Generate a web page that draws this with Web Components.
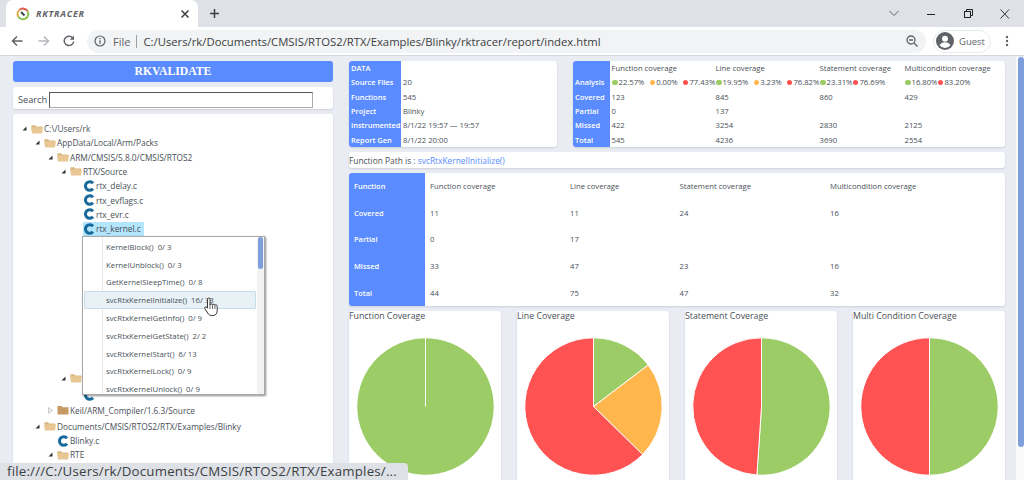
<!DOCTYPE html>
<html lang="en"><head><meta charset="utf-8"><title>RKTRACER</title>
<style>
html,body{margin:0;padding:0;height:100%;overflow:hidden}
body{font-family:"Open Sans","Liberation Sans",sans-serif;color:#495057;background:#e9edf3}
</style></head><body>
<rk-app></rk-app>
<script>
const el=(name,css,html)=>{customElements.define(name,class extends HTMLElement{
  constructor(){super();this.attachShadow({mode:'open'})}
  connectedCallback(){const h=typeof html==='function'?html(this):html;this.shadowRoot.innerHTML=`<style>${css}</style>${h}`;}
})};
const ui='"Open Sans","Noto Sans","Liberation Sans",sans-serif';

el('tab-strip',`:host{display:flex;height:27px;background:#dee1e6;align-items:flex-end;flex:none;position:relative}
.tab{width:192px;height:27px;margin-left:6px;background:#fff;border-radius:7px 7px 0 0;display:flex;align-items:center;box-sizing:border-box;padding:0 8px 0 10px}
.t{flex:1;margin-left:6px;font:italic 700 9px ${ui};letter-spacing:.75px;color:#5f6368}
.plus{margin-left:11px;align-self:center}
.ctl{margin-left:auto;display:flex;align-items:center;gap:21px;padding-right:11px;align-self:stretch}
svg{display:block}`,`<div class="tab">
<svg width="14" height="14" viewBox="0 0 14 14" fill="none"><path d="M2.3 9.7A5.3 5.3 0 0 1 4 2.5" stroke="#e4a23f" stroke-width="2"/><path d="M4 2.5A5.3 5.3 0 0 1 11.5 4" stroke="#df5a4a" stroke-width="2"/><path d="M11.5 4A5.3 5.3 0 1 1 2.3 9.7" stroke="#8cc152" stroke-width="2"/><path d="M5 5l3.5 3.5" stroke="#3a4650" stroke-width="2"/></svg>
<span class="t">RKTRACER</span>
<svg width="10" height="10" viewBox="0 0 10 10"><path d="M1.5 1.5l7 7M8.5 1.5l-7 7" stroke="#3c4043" stroke-width="1.5"/></svg></div>
<svg class="plus" width="11" height="11" viewBox="0 0 11 11"><path d="M5.5 1v9M1 5.5h9" stroke="#3c4043" stroke-width="1.5"/></svg>
<div class="ctl">
<svg width="16" height="10" viewBox="0 0 16 10"><path d="M3.5 2l4.5 4.5L12.5 2" fill="none" stroke="#5f6368"/></svg>
<svg width="16" height="10" viewBox="0 0 16 10"><path d="M4 5.5h8" stroke="#222"/></svg>
<svg width="16" height="10" viewBox="0 0 16 10" fill="none" stroke="#222"><rect x="4.5" y="2.5" width="6" height="6"/><path d="M6.5 2.5V.5h6v6h-2"/></svg>
<svg width="16" height="10" viewBox="0 0 16 10"><path d="M3.5.5l8.5 9M12 .5L3.5 9.5" stroke="#333"/></svg>
</div>`);

el('tool-bar',`:host{display:flex;align-items:center;height:28px;background:#fff;flex:none;border-bottom:1px solid #d5d8dd;position:relative;padding-left:11px}
svg{display:block;flex:none}
.om{margin-left:12px;width:839px;height:23px;border-radius:12px;background:#f1f3f4;display:flex;align-items:center;box-sizing:border-box;padding:0 8px 0 7px;font:11.3px ${ui};color:#3c4043}
.file{margin-left:7px;color:#5f6368;font-size:11px}
.sep{width:1px;height:13px;background:#9aa0a6;margin:0 6px 0 6px}
.url{flex:1;white-space:nowrap;overflow:hidden}
.pill{margin-left:7px;width:58px;height:23px;border:1px solid #e8eaed;box-sizing:border-box;border-radius:12px;display:flex;align-items:center;padding-left:2px;font:9.5px ${ui};color:#5f6368}
.pill span{margin-left:5px}
.keb{margin-left:14px}`,`
<svg width="12" height="12" viewBox="0 0 12 12" fill="none" stroke="#5f6368" stroke-width="1.5"><path d="M11.5 6H1.5M6 1.5L1.5 6 6 10.5"/></svg>
<svg style="margin-left:15px" width="12" height="12" viewBox="0 0 12 12" fill="none" stroke="#b6b9bd" stroke-width="1.5"><path d="M.5 6h10M6 1.5L10.5 6 6 10.5"/></svg>
<svg style="margin-left:13px" width="12" height="12" viewBox="0 0 12 12" fill="none"><path d="M10.6 6.5A4.7 4.7 0 1 1 9.3 2.6" stroke="#5f6368" stroke-width="1.5"/><path d="M11 .5v4.2H6.8z" fill="#5f6368"/></svg>
<div class="om">
<svg width="12" height="12" viewBox="0 0 12 12" fill="none"><circle cx="6" cy="6" r="5" stroke="#5f6368" stroke-width="1.2"/><path d="M6 5.3v3.5M6 3v1.3" stroke="#5f6368" stroke-width="1.3"/></svg>
<span class="file">File</span><span class="sep"></span>
<span class="url">C:/Users/rk/Documents/CMSIS/RTOS2/RTX/Examples/Blinky/rktracer/report/index.html</span>
<svg width="12" height="12" viewBox="0 0 12 12" fill="none" stroke="#5f6368" stroke-width="1.3"><circle cx="5" cy="5" r="4"/><path d="M3 5h4M8 8l3.5 3.5"/></svg>
</div>
<div class="pill"><svg width="18" height="18" viewBox="0 0 18 18"><circle cx="9" cy="9" r="9" fill="#5f6368"/><circle cx="9" cy="6.8" r="3" fill="#fff"/><path d="M3.5 13.2c1.5-2.4 3.5-3 5.5-3s4 .6 5.5 3A7 7 0 0 1 9 16a7 7 0 0 1-5.500-2.800z" fill="#fff"/></svg><span>Guest</span></div>
<svg class="keb" width="4" height="12" viewBox="0 0 4 12" fill="#5f6368"><circle cx="2" cy="2" r="1.2"/><circle cx="2" cy="6" r="1.2"/><circle cx="2" cy="10" r="1.2"/></svg>`);

el('rk-card',`:host{display:block;background:#fff;border-radius:3px;box-shadow:0 1px 2px rgba(0,0,0,.12);overflow:hidden;box-sizing:border-box}`,`<slot></slot>`);

el('tree-row',`:host{display:flex;align-items:center;height:14.3px;flex:none;font:8.3px ${ui};color:#495057;white-space:nowrap}
.tw{width:13px;flex:none;display:flex;justify-content:center}
.lab{display:flex;align-items:center;height:14.3px;padding-right:3px}
.lab.sel{background:#b3e5fc}
.lab span{margin-left:1px}
svg{display:block;flex:none}`,h=>{
 const lv=+h.getAttribute('level'),k=h.getAttribute('kind'),sel=h.hasAttribute('selected');
 const tw=k==='open'?`<svg width="5" height="5" viewBox="0 0 5 5"><path d="M4.5.5v4h-4z" fill="#333"/></svg>`
  :k==='closed'?`<svg width="5" height="7" viewBox="0 0 5 7"><path d="M.5.5L4.5 3.5.5 6.5z" fill="#eee" stroke="#bbb" stroke-width=".7"/></svg>`:'';
 const ic=k==='file'?`<svg width="12" height="12" viewBox="0 0 12 12"><path d="M10 3.2A4.3 4.3 0 1 0 10 8.8" fill="none" stroke="#176a9b" stroke-width="3"/></svg>`
  :k==='open'?`<svg width="12" height="10" viewBox="0 0 12 10"><path d="M.5 2.5V1.3h3.7l.8 1.2H11v1.5H.5z" fill="#d9b680"/><path d="M0 3.3h12l-1 6.2H1z" fill="#e8c795"/></svg>`
  :`<svg width="12" height="10" viewBox="0 0 12 10"><path d="M.5 9.5V1h4l1 1.2h6v7.3z" fill="#c49a62"/></svg>`;
 return `<div style="width:${lv*13}px;flex:none"></div><div class="tw">${tw}</div><div class="lab ${sel?'sel':''}">${ic}<span><slot></slot></span></div>`});

el('menu-item',`:host{display:flex;align-items:center;height:17.8px;padding-left:23px;font:7.8px ${ui};color:#495057;white-space:pre;box-sizing:border-box;position:relative;margin-right:8px}
:host([hover]){background:#e7f1f6;box-shadow:inset 0 0 0 1px #c6dde8;border-radius:2px;margin-left:1px;padding-left:22px}`,`<slot></slot>`);

el('func-menu',`:host{display:block;position:absolute;left:82px;top:236px;width:183px;height:159px;background:#fff;border:1px solid #a9a9a9;box-sizing:border-box;box-shadow:1px 1px 2px rgba(0,0,0,.45);overflow:hidden}
.line{position:absolute;left:19px;top:0;bottom:0;width:1px;background:#e6e6e6}
.track{position:absolute;right:0;top:0;bottom:0;width:7px;background:#f2f2f2}
.thumb{position:absolute;right:1px;top:0;width:5px;height:32px;background:#7f9fdc;border-radius:3px}
.items{position:relative;padding-top:1px}`,`<div class="line"></div><div class="track"></div><div class="thumb"></div><div class="items"><slot></slot></div>`);

el('rk-sidebar',`:host{display:flex;flex-direction:column;gap:5px;width:320px;flex:none}
.hd{height:21px;flex:none;background:#5b8cff;border-radius:3px;color:#fff;font:700 11.7px "Liberation Serif",serif;display:flex;align-items:center;justify-content:center}
.s{display:flex;align-items:center;height:25px;padding-left:5px;font:9.2px ${ui};color:#495057}
input{margin:0 0 0 2px;width:264px;height:16px;box-sizing:border-box;border:1px solid;border-color:#555 #aaa #aaa #555;padding:0;background:#fff}
.tr{display:flex;flex-direction:column;padding:7px 0 0 5px;height:400px}`,`<div class="hd">RKVALIDATE</div>
<rk-card><div class="s"><span>Search</span><input type="text" aria-label="Search"></div></rk-card>
<rk-card><div class="tr"><slot></slot></div></rk-card>`);

el('kv-table',`:host{display:block;height:100%;font:600 7.7px ${ui};color:#495057}
.g{display:grid;height:100%;grid-auto-rows:1fr}`,h=>`<div class="g" style="grid-template-columns:${h.getAttribute('cols')}"><slot></slot></div>`);

el('lab-cell',`:host{display:flex;align-items:center;background:#5b8cff;color:#fff;font:600 7.45px ${ui};white-space:nowrap;padding-left:2px}`,`<slot></slot>`);
el('val-cell',`:host{display:flex;align-items:center;font:7.7px ${ui};color:#495057;white-space:nowrap;padding-left:2px}`,`<slot></slot>`);
el('legend-cell',`:host{display:flex;align-items:center;padding-left:2px;font:7.7px ${ui};color:#495057;white-space:nowrap}`,`<slot></slot>`);
el('leg-item',`:host{display:inline-flex;align-items:center;white-space:nowrap}
i{width:5.5px;height:5.5px;border-radius:50%;margin:0 1px 0 .5px;flex:none}`,h=>`<i style="background:${{g:'#9ccc65',o:'#ffb74d',r:'#ff5252'}[h.getAttribute('c')]}"></i><slot></slot>`);

el('pie-chart',`:host{display:block;background:#fff;border-radius:3px;height:180px;box-shadow:0 1px 2px rgba(0,0,0,.12)}
.t{font:8.8px/11px ${ui};color:#495057;height:11px;white-space:nowrap}
svg{display:block;margin:14.5px auto 0 7px}`,h=>{
 const v=h.getAttribute('values').split(',').map(Number),cols=['#9ccc65','#ffb74d','#ff5252'],tot=v.reduce((a,b)=>a+b,0);
 let a=0,p='';const R=68.7,C=69.5;const pt=t=>[C+R*Math.sin(t),C-R*Math.cos(t)];
 v.forEach((x,i)=>{if(!x)return;const f=x/tot;if(f>=.9999){p+=`<circle cx="${C}" cy="${C}" r="${R}" fill="${cols[i]}" stroke="#fff" stroke-width="1"/><path d="M${C} ${C}V${C-R}" stroke="#fff" stroke-width="1"/>`;return}
  const s=pt(a),e=pt(a+=f*2*Math.PI);p+=`<path d="M${C} ${C}L${s[0].toFixed(2)} ${s[1].toFixed(2)}A${R} ${R} 0 ${f>.5?1:0} 1 ${e[0].toFixed(2)} ${e[1].toFixed(2)}Z" fill="${cols[i]}" stroke="#fff" stroke-width="1"/>`});
 return `<div class="t"><slot></slot></div><svg width="139" height="139" viewBox="0 0 139 139">${p}</svg>`});

el('status-bubble',`:host{display:block;position:absolute;left:0;bottom:0;width:408px;height:17px;box-sizing:border-box;background:#dee1e6;border-radius:0 4px 0 0;padding-left:7px;font:13.3px/17px ${ui};color:#3c4043;white-space:nowrap;overflow:hidden;letter-spacing:.19px}`,`<slot></slot>`);

el('hand-cursor',`:host{display:block;position:absolute;left:204px;top:297px;width:16px;height:20px}svg{display:block}`,
`<svg width="16" height="20" viewBox="0 0 16 20"><path d="M3.5 2.2c0-1.600 2.500-1.600 2.500 0V8c.3-1.600 2.500-1.500 2.500.1.400-1.400 2.400-1.200 2.400.4.500-1 2.300-.8 2.300.8v4.500c0 2.700-1.500 4.700-4.200 4.700H7.300c-1.800 0-2.700-1-3.500-2.300L.9 11.700c-.8-1.400 1-2.600 2-1.300l.6.8z" fill="#fff" stroke="#222" stroke-width=".9" stroke-linejoin="round"/><path d="M6 8v4M8.5 8.300v3.700M10.900 8.700V12" stroke="#222" stroke-width=".7"/></svg>`);

el('page-scroll',`:host{display:block;position:absolute;right:0;top:57px;width:8px;height:423px;background:#fafafa}
b{display:block;margin-left:2px;width:6px;height:390px;border-radius:3px;background:#7f9fdc}`,`<b></b>`);

el('rk-main',`:host{display:flex;flex-direction:column;gap:5px;width:656px;flex:none}
::slotted(*){flex:none}`,`<slot></slot>`);

customElements.define('rk-app',class extends HTMLElement{
 constructor(){super();this.attachShadow({mode:'open'})}
 connectedCallback(){
  const L=(s)=>`<lab-cell>${s}</lab-cell>`,V=(s='')=>`<val-cell>${s}</val-cell>`;
  const M=(s)=>`<leg-item c="${s[0]}" style="margin-right:${s[2]}px">${s[1]}</leg-item>`;
  const LG=(arr)=>`<legend-cell>${arr.map(M).join('')}</legend-cell>`;
  const T=(l,k,t,x='')=>`<tree-row level="${l}" kind="${k}" ${x}>${t}</tree-row>`;
  const H=(s,x='')=>`<menu-item ${x}>${s}</menu-item>`;
  const P=(t,v)=>`<pie-chart values="${v}">${t}</pie-chart>`;
  const I=(s)=>`<span style="padding-left:3px">${s}</span>`;
  this.shadowRoot.innerHTML=`<style>
  :host{display:flex;flex-direction:column;height:100vh;overflow:hidden;position:relative}
  .page{flex:1;min-height:0;display:flex;gap:16px;padding:5px 0 0 13px;background:#e9edf3;overflow:hidden}
  .blue{color:#5b8cff}
  .top{display:grid;grid-template-columns:208px 432px;gap:16px;height:86px}
  .path{height:16px;display:flex;align-items:center;font:8.4px ${ui};color:#495057;white-space:pre}
  .ch{display:grid;grid-template-columns:repeat(4,152px);gap:16px;height:180px}
  .spacer{height:135.45px;flex:none}
  </style>
  <tab-strip></tab-strip><tool-bar></tool-bar>
  <div class="page">
   <rk-sidebar>
    ${T(0,'open','C:\\/Users/rk')}${T(1,'open','AppData/Local/Arm/Packs')}${T(2,'open','ARM/CMSIS/5.8.0/CMSIS/RTOS2')}${T(3,'open','RTX/Source')}
    ${T(4,'file','rtx_delay.c')}${T(4,'file','rtx_evflags.c')}${T(4,'file','rtx_evr.c')}${T(4,'file','rtx_kernel.c','selected')}
    <div class="spacer"></div>
    ${T(3,'open','')}
    ${T(4,'file','','style="margin-top:2.7px"')}
    ${T(2,'closed','Keil/ARM_Compiler/1.6.3/Source','style="margin-top:.7px"')}
    ${T(1,'open','Documents/CMSIS/RTOS2/RTX/Examples/Blinky','style="margin-top:1.7px"')}
    ${T(2,'file','Blinky.c')}${T(2,'open','RTE')}
   </rk-sidebar>
   <rk-main>
    <div class="top">
     <rk-card><kv-table cols="52px 1fr" style="height:86px">
      ${L('DATA')}${V()}${L('Source Files')}${V('20')}${L('Functions')}${V('545')}${L('Project')}${V('Blinky')}${L('Instrumented')}${V('8/1/22 19:57 — 19:57')}${L('Report Gen')}${V('8/1/22 20:00')}
     </kv-table></rk-card>
     <rk-card><kv-table cols="36.5px 104px 104px 85px 1fr" style="height:86px">
      ${L('')}${V('Function coverage')}${V('Line coverage')}${V('Statement coverage')}${V('Multicondition coverage')}
      ${L('Analysis')}${LG([['g','22.57%',4.7],['o','0.00%',4.7],['r','77.43%',0]])}${LG([['g','19.95%',4.7],['o','3.23%',4.7],['r','76.82%',0]])}${LG([['g','23.31%',0],['r','76.69%',0]])}${LG([['g','16.80%',0],['r','83.20%',0]])}
      ${L('Covered')}${V('123')}${V('845')}${V('860')}${V('429')}
      ${L('Partial')}${V('0')}${V('137')}${V()}${V()}
      ${L('Missed')}${V('422')}${V('3254')}${V('2830')}${V('2125')}
      ${L('Total')}${V('545')}${V('4236')}${V('3690')}${V('2554')}
     </kv-table></rk-card>
    </div>
    <rk-card><div class="path">Function Path is : <span class="blue">svcRtxKernelInitialize()</span></div></rk-card>
    <rk-card style="height:133px"><kv-table cols="76px 143px 109.5px 150.5px 1fr">
     ${L(I('Function'))}${V(I('Function coverage'))}${V('Line coverage')}${V('Statement coverage')}${V('Multicondition coverage')}
     ${L(I('Covered'))}${V(I('11'))}${V('11')}${V('24')}${V('16')}
     ${L(I('Partial'))}${V(I('0'))}${V('17')}${V()}${V()}
     ${L(I('Missed'))}${V(I('33'))}${V('47')}${V('23')}${V('16')}
     ${L(I('Total'))}${V(I('44'))}${V('75')}${V('47')}${V('32')}
    </kv-table></rk-card>
    <div class="ch">${P('Function Coverage','1')}${P('Line Coverage','11,17,47')}${P('Statement Coverage','24,0,23')}${P('Multi Condition Coverage','16,0,16')}</div>
   </rk-main>
  </div>
  <func-menu>
   ${H('KernelBlock()  0/ 3')}${H('KernelUnblock()  0/ 3')}${H('GetKernelSleepTime()  0/ 8')}${H('svcRtxKernelInitialize()  16/ 33','hover')}${H('svcRtxKernelGetInfo()  0/ 9')}${H('svcRtxKernelGetState()  2/ 2')}${H('svcRtxKernelStart()  6/ 13')}${H('svcRtxKernelLock()  0/ 9')}${H('svcRtxKernelUnlock()  0/ 9')}
  </func-menu>
  <hand-cursor></hand-cursor>
  <status-bubble>file:///C:/Users/rk/Documents/CMSIS/RTOS2/RTX/Examples/...</status-bubble>
  <page-scroll></page-scroll>`;
 }
});
</script>
</body></html>
